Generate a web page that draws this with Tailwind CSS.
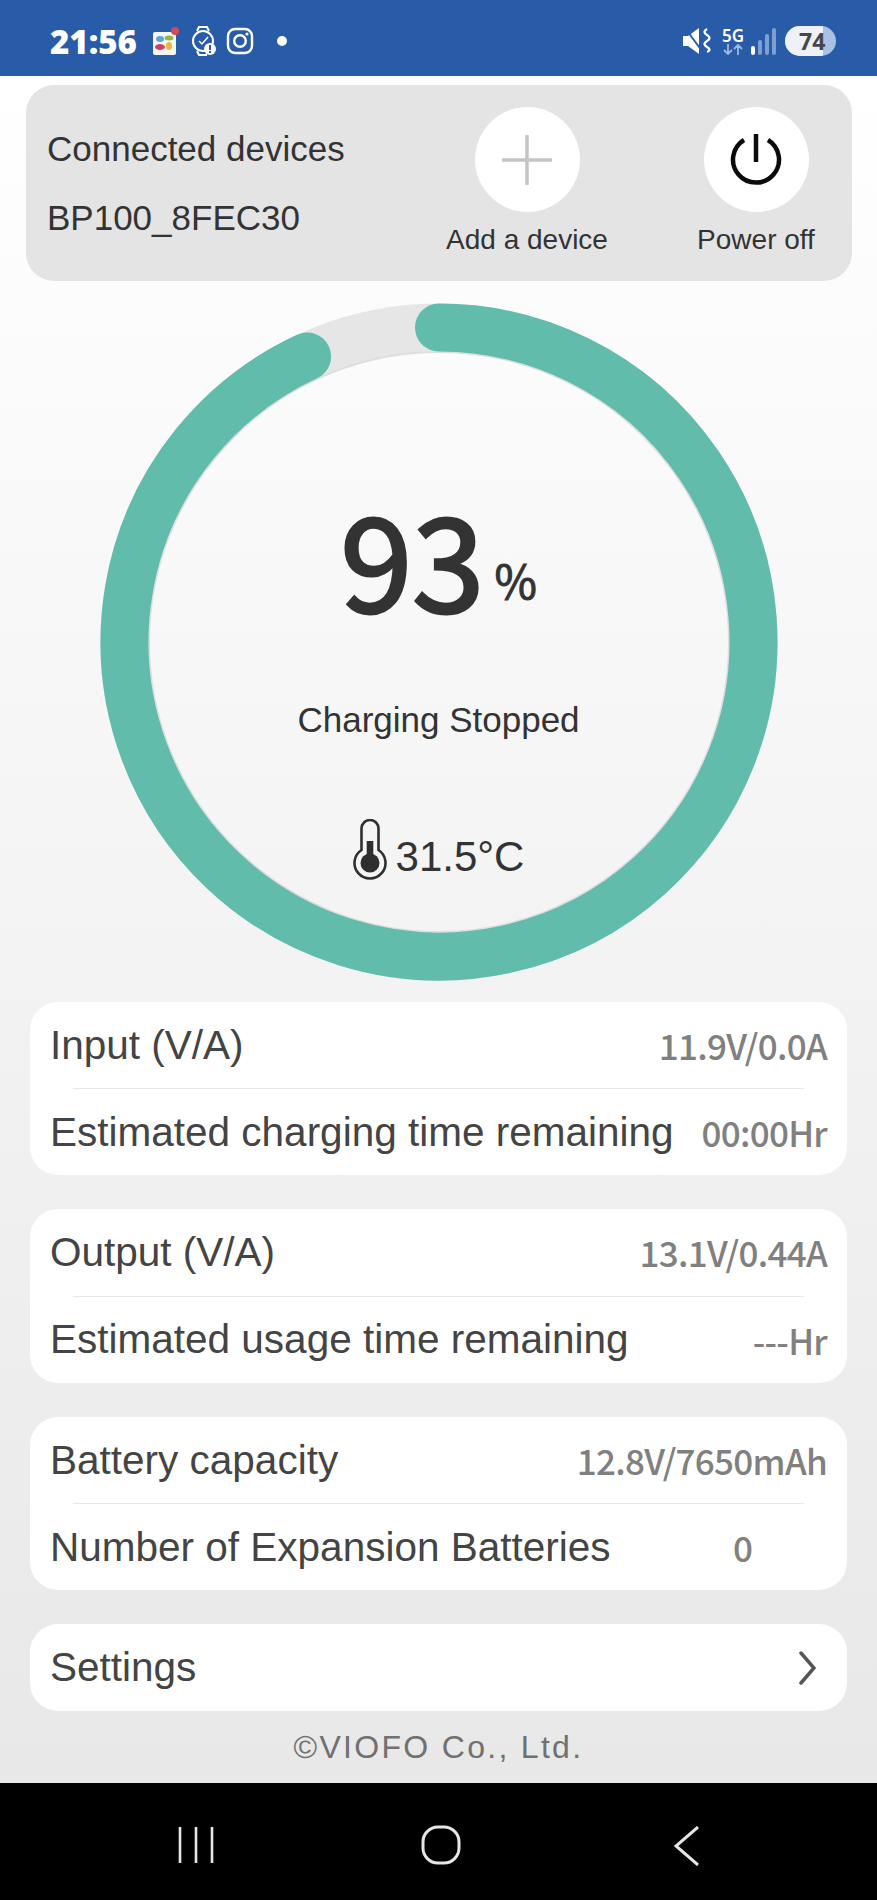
<!DOCTYPE html>
<html>
<head>
<meta charset="utf-8">
<script src="https://cdn.jsdelivr.net/npm/@tailwindcss/browser@4"></script>
</head>
<body class="m-0 bg-black">
<div class="w-[877px] h-[1900px] flex flex-col overflow-hidden font-['Liberation_Sans',sans-serif]">
  <header class="h-[76px] shrink-0 bg-[#285ca8] flex items-center pt-[6px] pl-[50px] pr-[41px] text-white">
    <span class="text-[33px] font-black w-[86px] leading-none font-['Noto_Sans',sans-serif]">21:56</span>
    <svg class="ml-[16px]" width="28" height="30" viewBox="0 0 28 30"><rect x="1" y="6" width="23" height="23" rx="2" fill="#f6f6f4"/><ellipse cx="8" cy="13" rx="4" ry="3" fill="#5aa5dc"/><ellipse cx="17" cy="12" rx="4.5" ry="2.5" fill="#8dbb45"/><ellipse cx="8" cy="21" rx="5" ry="3" fill="#d43d66"/><ellipse cx="17" cy="20" rx="3" ry="4" fill="#eab83a"/><circle cx="23" cy="5" r="4" fill="#d9485a"/></svg>
    <svg class="ml-[11px]" width="26" height="32" viewBox="0 0 26 32" fill="none" stroke="#fff"><circle cx="12" cy="16" r="10" stroke-width="2"/><path d="M6 6 L8 2 H16 L18 6 M6 26 L8 30 H16" stroke-width="2"/><path d="M8 16 L11 19 L17 12" stroke-width="1.5"/><circle cx="19" cy="24" r="6" fill="#fff" stroke="none"/><rect x="18" y="20" width="2" height="5" fill="#285ca8" stroke="none"/><rect x="18" y="26" width="2" height="2" fill="#285ca8" stroke="none"/></svg>
    <svg class="ml-[9px]" width="28" height="28" viewBox="0 0 28 28" fill="none" stroke="#fff" stroke-width="2.4"><rect x="2" y="2" width="24" height="24" rx="7"/><circle cx="14" cy="14" r="5.8"/><circle cx="21" cy="7" r="1.6" fill="#fff" stroke="none"/></svg>
    <span class="ml-[23px] w-[10px] h-[10px] rounded-full bg-white"></span>
    <div class="flex-1"></div>
    <svg width="28" height="28" viewBox="0 0 28 28" fill="#fff"><path d="M0 9 H5 L16 1 V27 L5 19 H0 Z"/><path d="M2 1 L19 24" stroke="#285ca8" stroke-width="2"/><path d="M24 2 q-5 3 0 6 q5 3 0 6 q-5 3 0 6 q5 3 0 5" stroke="#fff" stroke-width="2.4" fill="none"/></svg>
    <div class="ml-[10px] w-[24px] flex flex-col items-center leading-none">
      <span class="text-[17px] font-semibold leading-[16px] font-['Noto_Sans',sans-serif]">5G</span>
      <svg width="20" height="11" viewBox="0 0 20 11" fill="none" stroke="#9db8dd" stroke-width="1.8"><path d="M5 0 V10 M1 6 L5 10 L9 6 M15 11 V1 M11 5 L15 1 L19 5"/></svg>
    </div>
    <div class="ml-[6px] flex items-end gap-[3px] h-[27px]">
      <span class="w-[4px] h-[9px] rounded-sm bg-white"></span>
      <span class="w-[4px] h-[15px] rounded-sm bg-[#7f9fd0]"></span>
      <span class="w-[4px] h-[21px] rounded-sm bg-[#7f9fd0]"></span>
      <span class="w-[4px] h-[27px] rounded-sm bg-[#7f9fd0]"></span>
    </div>
    <div class="ml-[9px] relative w-[51px] h-[30px] rounded-full overflow-hidden bg-[#a9c1e2] shrink-0">
      <div class="h-full w-[38px] bg-[#eef1f7]"></div>
      <span class="absolute left-[14px] top-0 text-[23px] leading-[30px] font-bold text-[#44474d] font-['Noto_Sans',sans-serif]">74</span>
    </div>
  </header>

  <main class="flex-1 bg-linear-to-b from-white to-[#e8e8e8] flex flex-col relative">
    <section class="mx-[26px] mt-[9px] h-[196px] w-[826px] shrink-0 rounded-[28px] bg-[#e4e4e4] flex relative text-[#333]">
      <div class="pl-[21px] pt-[45px] w-[398px] text-[35px] leading-[38px]">
        <div>Connected devices</div>
        <div class="mt-[31px]">BP100_8FEC30</div>
      </div>
      <div class="flex flex-col items-center w-[180px] pt-[22px] ml-[13px]">
        <div class="w-[105px] h-[105px] rounded-full bg-white flex items-center justify-center">
          <svg width="50" height="50" viewBox="0 0 50 50" stroke="#c4c4c4" stroke-width="3.5" stroke-linecap="round"><path d="M25 1 V49 M1 25 H49"/></svg>
        </div>
        <div class="mt-[12px] text-[28px] leading-[32px] whitespace-nowrap">Add a device</div>
      </div>
      <div class="flex flex-col items-center w-[180px] pt-[22px] ml-[49px]">
        <div class="w-[105px] h-[105px] rounded-full bg-white flex items-center justify-center">
          <svg width="52" height="52" viewBox="0 0 52 52" fill="none" stroke="#0b0b0b" stroke-width="4.5"><path d="M14 6 A23 23 0 1 0 38 6"/><path d="M26 0 V28"/></svg>
        </div>
        <div class="mt-[12px] text-[28px] leading-[32px] whitespace-nowrap">Power off</div>
      </div>
    </section>

    <section class="relative h-[721px] shrink-0">
      <svg class="absolute left-[100px] top-[22px]" width="678" height="678" viewBox="0 0 678 678" fill="none">
        <circle cx="339" cy="339" r="314.5" stroke="#e6e6e6" stroke-width="48"/>
        <circle cx="339" cy="339" r="290" stroke="#dedede" stroke-width="2"/>
        <path d="M 339 24.5 A 314.5 314.5 0 1 1 207.1 53.5" stroke="#61bcab" stroke-width="48" stroke-linecap="round"/>
      </svg>
      <div class="absolute left-0 right-0 top-[209px] flex flex-col items-center text-[#333]">
        <div class="flex items-baseline h-[130px] leading-none font-['Noto_Sans_CJK_SC',sans-serif]">
          <span class="text-[130px] leading-[130px] [-webkit-text-stroke:3px_#333]">93</span>
          <span class="text-[46px] ml-[10px] -translate-y-[13px] [-webkit-text-stroke:1px_#333]">%</span>
        </div>
        <div class="mt-[81px] text-[35px] leading-[38px]">Charging Stopped</div>
        <div class="mt-[80px] flex items-end gap-[9px] h-[62px]">
          <svg width="34" height="62" viewBox="0 0 34 62" fill="none" stroke="#2f2f2f" stroke-width="2.6"><path d="M8.5 31 V9.5 A8.5 8.5 0 0 1 25.5 9.5 V31 A15.5 15.5 0 1 1 8.5 31 Z"/><circle cx="17" cy="44" r="9.5" fill="#2f2f2f" stroke="none"/><rect x="13.7" y="22" width="6.6" height="20" fill="#2f2f2f" stroke="none"/></svg>
          <span class="text-[42px] leading-[48px]">31.5°C</span>
        </div>
      </div>
    </section>

    <section class="mx-[30px] h-[173px] rounded-[28px] bg-white flex flex-col px-[20px] shrink-0">
      <div class="flex-1 flex justify-between items-center"><span class="text-[40.5px] text-[#444]">Input (V/A)</span><span class="text-[35px] tracking-[-0.7px] text-[#808080] font-medium font-['Noto_Sans_CJK_SC',sans-serif]">11.9V/0.0A</span></div>
      <div class="h-px mx-[23px] bg-[#e8e8e8]"></div>
      <div class="flex-1 flex justify-between items-center"><span class="text-[40.5px] text-[#444]">Estimated charging time remaining</span><span class="text-[35px] tracking-[-0.7px] text-[#808080] font-medium font-['Noto_Sans_CJK_SC',sans-serif]">00:00Hr</span></div>
    </section>
    <section class="mx-[30px] mt-[34px] h-[174px] rounded-[28px] bg-white flex flex-col px-[20px] shrink-0">
      <div class="flex-1 flex justify-between items-center"><span class="text-[40.5px] text-[#444]">Output (V/A)</span><span class="text-[35px] tracking-[-0.7px] text-[#808080] font-medium font-['Noto_Sans_CJK_SC',sans-serif]">13.1V/0.44A</span></div>
      <div class="h-px mx-[23px] bg-[#e8e8e8]"></div>
      <div class="flex-1 flex justify-between items-center"><span class="text-[40.5px] text-[#444]">Estimated usage time remaining</span><span class="text-[35px] tracking-[-0.7px] text-[#808080] font-medium font-['Noto_Sans_CJK_SC',sans-serif]">---Hr</span></div>
    </section>
    <section class="mx-[30px] mt-[34px] h-[173px] rounded-[28px] bg-white flex flex-col px-[20px] shrink-0">
      <div class="flex-1 flex justify-between items-center"><span class="text-[40.5px] text-[#444]">Battery capacity</span><span class="text-[35px] tracking-[-0.7px] text-[#808080] font-medium font-['Noto_Sans_CJK_SC',sans-serif]">12.8V/7650mAh</span></div>
      <div class="h-px mx-[23px] bg-[#e8e8e8]"></div>
      <div class="flex-1 flex justify-between items-center"><span class="text-[40.5px] text-[#444]">Number of Expansion Batteries</span><span class="text-[35px] text-[#808080] font-medium mr-[74px] font-['Noto_Sans_CJK_SC',sans-serif]">0</span></div>
    </section>
    <section class="mx-[30px] mt-[34px] h-[87px] rounded-[28px] bg-white flex justify-between items-center pl-[20px] pr-[31px] shrink-0">
      <span class="text-[40.5px] text-[#444]">Settings</span>
      <svg width="17" height="34" viewBox="0 0 17 34" fill="none" stroke="#555" stroke-width="3.5" stroke-linecap="round"><path d="M2 2 L15 17 L2 32"/></svg>
    </section>
    <div class="mt-[18px] text-center text-[32px] leading-[36px] tracking-[2.3px] text-[#707070]">©VIOFO Co., Ltd.</div>
  </main>

  <nav class="h-[117px] shrink-0 bg-black relative">
    <svg class="absolute left-[178px] top-[44px]" width="36" height="36" viewBox="0 0 36 36" stroke="#e6e6e6" stroke-width="2.6" fill="none"><path d="M2 0 V36 M18 0 V36 M34 0 V36"/></svg>
    <svg class="absolute left-[421px] top-[42px]" width="40" height="40" viewBox="0 0 40 40" stroke="#e6e6e6" stroke-width="3" fill="none"><rect x="2" y="2" width="36" height="36" rx="15"/></svg>
    <svg class="absolute left-[673px] top-[43px]" width="28" height="40" viewBox="0 0 28 40" stroke="#e6e6e6" stroke-width="3" fill="none"><path d="M25 1 L3 20 L25 39"/></svg>
  </nav>
</div>
</body>
</html>
